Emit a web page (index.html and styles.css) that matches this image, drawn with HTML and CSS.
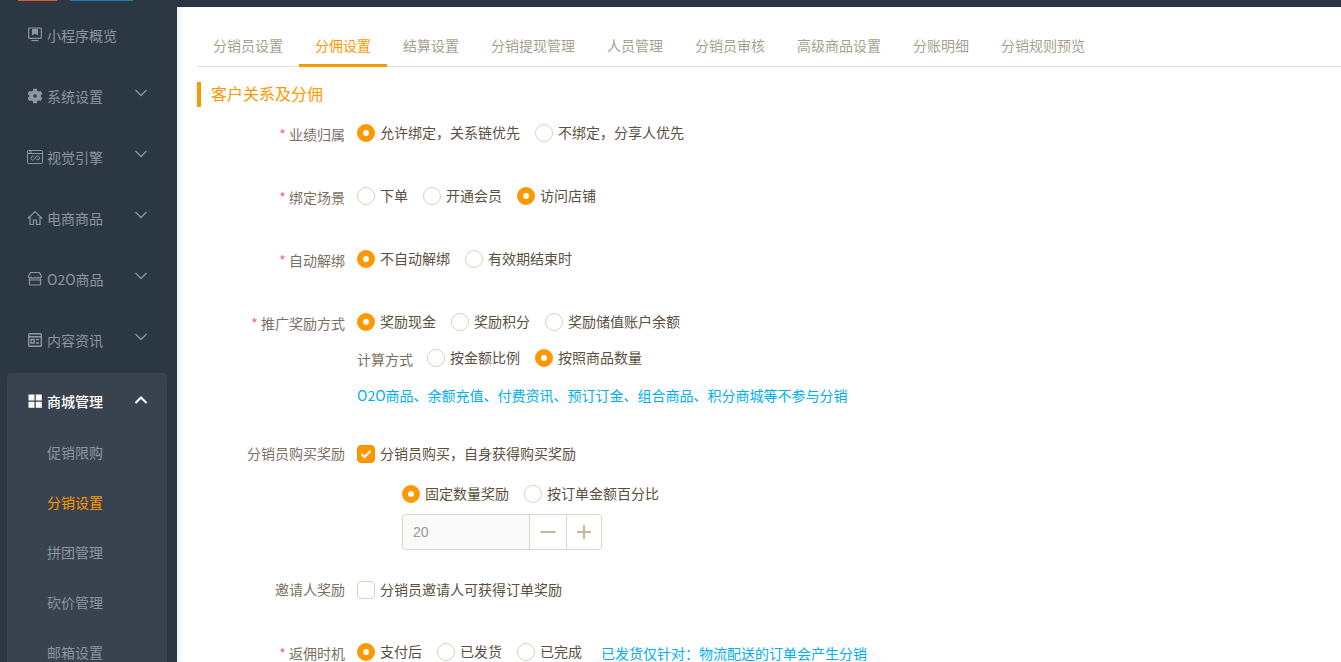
FILE: index.html
```html
<!DOCTYPE html>
<html lang="en">

<head>
    <meta charset="UTF-8">
    <title>分销设置</title>
    <link rel="stylesheet" href="styles.css">
</head>

<body>
    <div id="page">
        <div id="sidebar">
            <div class="logo-strip">
                <div class="logo-red"></div>
                <div class="logo-blue"></div>
            </div>
            <div class="nav-item">
                <svg class="nav-icon" viewBox="0 0 16 16" fill="none" stroke="currentColor" stroke-width="1.2"><rect x="1.6" y="1" width="12.8" height="10.4" rx="1"/><path d="M4.5 13.6h7"/><path d="M5 2h6v6.5L8 6.8 5 8.500z" fill="currentColor" stroke="none"/></svg>
                <span>小程序概览</span>
            </div>
            <div class="nav-item">
                <svg class="nav-icon" viewBox="0 0 16 16"><path fill="currentColor" fill-rule="evenodd" d="M6.300.8h3.400l.5 2 1.500.8 2-.6 1.700 3-1.500 1.300v1.400l1.500 1.300-1.700 3-2-.6-1.500.8-.5 2H6.300l-.5-2-1.500-.8-2 .6-1.700-3 1.500-1.300V7.300L.6 6l1.700-3 2 .6 1.500-.8zM8 6.200a1.800 1.800 0 1 0 0 3.600 1.800 1.800 0 0 0 0-3.600z"/></svg>
                <span>系统设置</span>
                <svg class="nav-arrow" viewBox="0 0 14 8" fill="none" stroke="currentColor" stroke-width="1.300"><path d="M1.500 1l5.500 5.500L12.500 1"/></svg>
            </div>
            <div class="nav-item">
                <svg class="nav-icon" viewBox="0 0 16 16" fill="none" stroke="currentColor" stroke-width="1"><rect x=".5" y="1.500" width="15" height="13" rx=".8"/><path d="M.5 4.500h15M2 3h3"/><path d="M7.500 8c-1-1.500-3.500-1-3.500 1.200s2.500 2.500 3.500.8l1.500-2.200c1-1.500 3.500-1 3.500 1.200s-2.800 2.500-3.500.8"/></svg>
                <span>视觉引擎</span>
                <svg class="nav-arrow" viewBox="0 0 14 8" fill="none" stroke="currentColor" stroke-width="1.300"><path d="M1.500 1l5.500 5.500L12.500 1"/></svg>
            </div>
            <div class="nav-item">
                <svg class="nav-icon" viewBox="0 0 16 16" fill="none" stroke="currentColor" stroke-width="1.200"><path d="M.8 8.500L8 1.500l7.200 7M3 7v7.500h3.500V10h3v4.500H13V7"/></svg>
                <span>电商商品</span>
                <svg class="nav-arrow" viewBox="0 0 14 8" fill="none" stroke="currentColor" stroke-width="1.300"><path d="M1.500 1l5.500 5.500L12.500 1"/></svg>
            </div>
            <div class="nav-item">
                <svg class="nav-icon" viewBox="0 0 16 16" fill="none" stroke="currentColor" stroke-width="1.200"><path d="M3.500 1.500h9l2 4c0 1.500-2 2-3 .8-.8 1-2.500 1-3.500 0-1 1-2.700 1-3.500 0-1 1.200-3 .7-3-.8z"/><path d="M2.500 7.500v5.500a1 1 0 0 0 1 1h9a1 1 0 0 0 1-1V7.500M1.500 9h13"/></svg>
                <span>O2O商品</span>
                <svg class="nav-arrow" viewBox="0 0 14 8" fill="none" stroke="currentColor" stroke-width="1.300"><path d="M1.500 1l5.500 5.500L12.500 1"/></svg>
            </div>
            <div class="nav-item">
                <svg class="nav-icon" viewBox="0 0 16 16" fill="none" stroke="currentColor" stroke-width="1.400"><rect x="1.700" y="1.700" width="12.600" height="12.600" rx=".8"/><path d="M1.700 4.800h12.600M4 7.500h3.200v3.500H4zM9 7.500h3M9 11h3"/></svg>
                <span>内容资讯</span>
                <svg class="nav-arrow" viewBox="0 0 14 8" fill="none" stroke="currentColor" stroke-width="1.300"><path d="M1.500 1l5.500 5.500L12.500 1"/></svg>
            </div>
            <div class="nav-group">
                <div class="nav-item nav-item-open">
                    <svg class="nav-icon" viewBox="0 0 16 16" fill="currentColor"><rect x="1.500" y="1.500" width="6" height="6"/><rect x="8.800" y="1.500" width="6" height="6"/><rect x="1.500" y="8.800" width="6" height="6"/><rect x="8.800" y="8.800" width="6" height="6"/></svg>
                    <span>商城管理</span>
                    <svg class="nav-arrow" viewBox="0 0 14 8" fill="none" stroke="currentColor" stroke-width="2"><path d="M1.500 7L7 1.500 12.500 7"/></svg>
                </div>
                <div class="sub-item">促销限购</div>
                <div class="sub-item sub-item-active">分销设置</div>
                <div class="sub-item">拼团管理</div>
                <div class="sub-item">砍价管理</div>
                <div class="sub-item">邮箱设置</div>
            </div>
        </div>

        <div id="main">
            <div class="top-bar"></div>
            <div class="tabs">
                <div class="tab">分销员设置</div>
                <div class="tab tab-active">分佣设置</div>
                <div class="tab">结算设置</div>
                <div class="tab">分销提现管理</div>
                <div class="tab">人员管理</div>
                <div class="tab">分销员审核</div>
                <div class="tab">高级商品设置</div>
                <div class="tab">分账明细</div>
                <div class="tab">分销规则预览</div>
            </div>

            <div class="section-title">客户关系及分佣</div>

            <div class="row row-gap-63">
                <div class="form-label"><i>*</i> 业绩归属</div>
                <div class="radio on">允许绑定，关系链优先</div>
                <div class="radio">不绑定，分享人优先</div>
            </div>
            <div class="row row-gap-63">
                <div class="form-label"><i>*</i> 绑定场景</div>
                <div class="radio">下单</div>
                <div class="radio">开通会员</div>
                <div class="radio on">访问店铺</div>
            </div>
            <div class="row row-gap-63">
                <div class="form-label"><i>*</i> 自动解绑</div>
                <div class="radio on">不自动解绑</div>
                <div class="radio">有效期结束时</div>
            </div>
            <div class="row row-gap-36">
                <div class="form-label"><i>*</i> 推广奖励方式</div>
                <div class="radio on">奖励现金</div>
                <div class="radio">奖励积分</div>
                <div class="radio">奖励储值账户余额</div>
            </div>
            <div class="row row-gap-38 row-indent">
                <div class="sub-label">计算方式</div>
                <div class="radio">按金额比例</div>
                <div class="radio on">按照商品数量</div>
            </div>
            <div class="row row-gap-58 row-indent">
                <div class="tip">O2O商品、余额充值、付费资讯、预订订金、组合商品、积分商城等不参与分销</div>
            </div>
            <div class="row row-gap-40">
                <div class="form-label form-label-flat">分销员购买奖励</div>
                <div class="check on">分销员购买，自身获得购买奖励</div>
            </div>
            <div class="row row-gap-20 row-indent-2">
                <div class="radio on">固定数量奖励</div>
                <div class="radio">按订单金额百分比</div>
            </div>
            <div class="stepper">
                <div class="stepper-value">20</div>
                <div class="stepper-btn">
                    <svg viewBox="0 0 16 16" width="16" height="16"><path d="M.5 8h15" stroke="#c2b79b" stroke-width="2"/></svg>
                </div>
                <div class="stepper-btn stepper-btn-last">
                    <svg viewBox="0 0 16 16" width="16" height="16"><path d="M1 8h14M8 1v14" stroke="#c2b79b" stroke-width="2"/></svg>
                </div>
            </div>
            <div class="row row-gap-62">
                <div class="form-label form-label-flat">邀请人奖励</div>
                <div class="check">分销员邀请人可获得订单奖励</div>
            </div>
            <div class="row">
                <div class="form-label"><i>*</i> 返佣时机</div>
                <div class="radio on">支付后</div>
                <div class="radio">已发货</div>
                <div class="radio">已完成</div>
                <div class="tip tip-side">已发货仅针对：物流配送的订单会产生分销</div>
            </div>
        </div>
    </div>
</body>

</html>
```

FILE: styles.css
```css
*,
*::before {
    box-sizing: border-box;
}

html,
body {
    margin: 0;
    height: 100%;
    overflow: hidden;
}

body {
    font-family: "Noto Sans CJK SC", "Liberation Sans", sans-serif;
    font-size: 14px;
    line-height: 20px;
    color: #5a5040;
    background-color: #fff;
}

#page {
    display: flex;
    height: 662px;
    overflow: hidden;
}

#sidebar {
    width: 177px;
    flex-shrink: 0;
    padding-top: 4px;
    background-color: #2c3744;
    position: relative;
}

.logo-strip {
    position: absolute;
    top: 0;
    left: 18px;
    display: flex;
    height: 1px;
}

.logo-red {
    width: 39px;
    background-color: #e8562a;
}

.logo-blue {
    width: 63px;
    margin-left: 13px;
    background-color: #1c7fb0;
}

.nav-item {
    display: flex;
    align-items: center;
    height: 61px;
    padding-left: 27px;
    color: #8d959e;
}

.nav-icon {
    width: 16px;
    height: 16px;
    margin-right: 4px;
    flex-shrink: 0;
}

.nav-arrow {
    width: 14px;
    height: 8px;
    margin-left: auto;
    margin-right: 29px;
    margin-top: -6px;
}

.nav-group {
    width: 160px;
    height: 300px;
    margin-top: 3px;
    margin-left: 7px;
    background-color: #39434f;
    border-radius: 4px 4px 0 0;
}

.nav-item-open {
    height: 54px;
    padding-top: 2px;
    padding-left: 20px;
    color: #fff;
    font-weight: 500;
}

.nav-item-open .nav-arrow {
    margin-top: -2px;
    margin-right: 19px;
}

.sub-item {
    height: 50px;
    line-height: 50px;
    padding-left: 40px;
    color: #8d959e;
}

.sub-item-active {
    color: #ff9800;
}

#main {
    flex: 1;
    min-width: 0;
    padding-left: 20px;
    box-shadow: inset 6px 0 6px -4px rgba(0, 0, 0, 0.08);
}

.top-bar {
    height: 7px;
    margin-left: -20px;
    background-color: #293441;
}

.tabs {
    display: flex;
    height: 60px;
    padding-top: 20px;
    border-bottom: 1px solid #e8e2d4;
}

.tab {
    height: 40px;
    padding: 0 16px;
    line-height: 36px;
    color: #a79f8f;
}

.tab-active {
    color: #ff9800;
    border-bottom: 3px solid #ff9800;
}

.section-title {
    height: 25px;
    margin-top: 15px;
    margin-bottom: 16px;
    padding-left: 10px;
    line-height: 23px;
    font-size: 16px;
    color: #ff9800;
    border-left: 4px solid #ff9800;
}

.row {
    display: flex;
    align-items: center;
    height: 20px;
}

.row-gap-20 {
    margin-bottom: 10px;
}

.row-gap-36 {
    margin-bottom: 16px;
}

.row-gap-38 {
    margin-bottom: 18px;
}

.row-gap-40 {
    margin-bottom: 20px;
}

.row-gap-58 {
    margin-bottom: 38px;
}

.row-gap-62 {
    margin-bottom: 42px;
}

.row-gap-63 {
    margin-bottom: 43px;
}

.row-indent {
    padding-left: 160px;
}

.row-indent-2 {
    padding-left: 205px;
}

.form-label {
    width: 148px;
    margin-right: 12px;
    padding-top: 2px;
    text-align: right;
    color: #7a705f;
}

.form-label-flat {
    padding-top: 0;
    padding-bottom: 2px;
}

.form-label i {
    font-style: normal;
    color: #f56c6c;
}

.sub-label {
    margin-right: 14px;
    padding-top: 2px;
    color: #7a705f;
}

.radio,
.check {
    display: flex;
    align-items: center;
    margin-right: 15px;
    padding-bottom: 2px;
    white-space: nowrap;
}

.radio::before,
.check::before {
    content: "";
    display: block;
    flex-shrink: 0;
    width: 18px;
    height: 18px;
    margin-right: 5px;
    margin-bottom: -2px;
    border: 1px solid #d9d2c3;
    background-color: #fff;
}

.radio::before {
    border-radius: 50%;
}

.radio.on::before {
    border: 6px solid #ff9800;
}

.check::before {
    border-radius: 4px;
}

.check.on::before {
    border-color: #ef8f00;
    background: #ff9800 url("data:image/svg+xml,%3Csvg xmlns='http://www.w3.org/2000/svg' viewBox='0 0 16 16'%3E%3Cpath d='M3.500 8l3 3 6-6' fill='none' stroke='white' stroke-width='2'/%3E%3C/svg%3E") center no-repeat;
}

.tip {
    padding-bottom: 2px;
    color: #00aeef;
    white-space: nowrap;
}

.tip-side {
    margin-left: 4px;
    padding-top: 2px;
    padding-bottom: 0;
}

.stepper {
    display: flex;
    width: 200px;
    height: 36px;
    margin-left: 205px;
    margin-bottom: 30px;
    border: 1px solid #ddd6c8;
    border-radius: 4px;
}

.stepper-value {
    flex: 1;
    padding-left: 10px;
    font-family: "Liberation Sans", sans-serif;
    line-height: 34px;
    color: #999;
    background-color: #fafafa;
    border-radius: 4px 0 0 4px;
}

.stepper-btn {
    display: flex;
    align-items: center;
    justify-content: center;
    width: 37px;
    border-left: 1px solid #ddd6c8;
}

.stepper-btn-last {
    width: 35px;
}
```
